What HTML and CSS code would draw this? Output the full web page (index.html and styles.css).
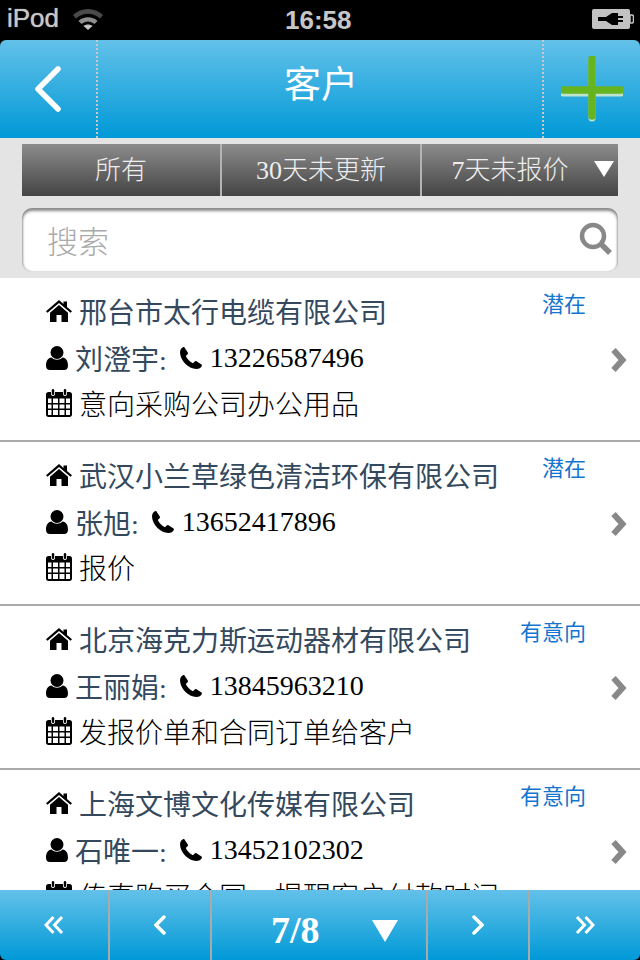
FILE: index.html
```html
<!DOCTYPE html>
<html lang="zh-CN">
<head>
    <meta charset="UTF-8">
    <meta name="viewport" content="width=device-width, initial-scale=1.0">
    <title>客户</title>
    <link rel="stylesheet" href="styles.css">
</head>
<body>
    <svg class="icon-defs" width="0" height="0">
        <symbol id="i-home" viewBox="0 0 26 22">
            <path d="M13 0 L17.500 3.900 V1.500 H21 V6.900 L26 11.200 L24.500 12.800 L13 2.900 L1.500 12.800 L0 11.200 Z"/>
            <path d="M13 5 L22 12.700 V22 H15.500 V15 H10.500 V22 H4 V12.700 Z"/>
        </symbol>
        <symbol id="i-user" viewBox="0 0 22 24">
            <circle cx="11" cy="6.500" r="6.500"/>
            <path d="M5.500 11.500 C8.500 14.500 13.500 14.500 16.500 11.500 C20 12 22 15 22 19.500 C22 22.500 20.500 24 18 24 H4 C1.500 24 0 22.500 0 19.500 C0 15 2 12 5.500 11.500 Z"/>
        </symbol>
        <symbol id="i-phone" viewBox="0 0 22 22">
            <path d="M4.500 0.500 L7.800 5.500 C8.200 6.200 8 6.800 7.500 7.300 L5.800 9 C7.200 12 10 14.800 13 16.200 L14.700 14.500 C15.200 14 15.800 13.800 16.500 14.200 L21.500 17.500 C22 17.800 22 18.500 21.800 19 C21 20.800 18.800 22 16.500 22 C8 21.500 0.500 14 0 5.500 C0 3.200 1.200 1 3 0.200 C3.500 0 4.200 0 4.500 0.500 Z"/>
        </symbol>
        <symbol id="i-calendar" viewBox="0 0 26 28">
            <path fill-rule="evenodd" d="M2.500 3 H5 V5 C5 7.500 9 7.500 9 5 V3 H17 V5 C17 7.500 21 7.500 21 5 V3 H23.500 C25 3 26 4 26 5.500 V25.500 C26 27 25 28 23.500 28 H2.500 C1 28 0 27 0 25.500 V5.500 C0 4 1 3 2.500 3 Z M2 9.500 V14 H5.500 V9.500 Z M7 9.500 V14 H12 V9.500 Z M13.500 9.500 V14 H18.500 V9.500 Z M20 9.500 V14 H24 V9.500 Z M2 15.500 V19.500 H5.500 V15.500 Z M7 15.500 V19.500 H12 V15.500 Z M13.500 15.500 V19.500 H18.500 V15.500 Z M20 15.500 V19.500 H24 V15.500 Z M2 21 V26 H5.500 V21 Z M7 21 V26 H12 V21 Z M13.500 21 V26 H18.500 V21 Z M20 21 V26 H24 V21 Z"/>
            <rect x="5.800" y="0" width="2.400" height="6" rx="1.200"/>
            <rect x="17.800" y="0" width="2.400" height="6" rx="1.200"/>
        </symbol>
        <symbol id="i-more" viewBox="0 0 18 26">
            <path d="M3.500 3 L12.500 13 L3.500 23" fill="none" stroke="#888" stroke-width="6"/>
        </symbol>
    </svg>

    <div class="status-bar">
        <div class="status-left">
            <span>iPod</span>
            <svg class="wifi" viewBox="0 0 32 24" width="32" height="24">
                <path d="M1 9 C9 1 23 1 31 9 L28 12.500 C21.500 6 10.500 6 4 12.500 Z" fill="#4a4a4a"/>
                <path d="M6.500 15 C11.500 10 20.500 10 25.500 15 L22.500 18 C18.500 14.500 13.500 14.500 9.500 18 Z" fill="#8e8e8e"/>
                <path d="M11.500 20 C14 18 18 18 20.500 20 L16 24 Z" fill="#c4c4c4"/>
            </svg>
        </div>
        <span class="status-time">16:58</span>
        <svg class="battery" viewBox="0 0 42 20" width="42" height="20">
            <rect x="0" y="0" width="38" height="20" rx="2" fill="#c2c2c2"/>
            <path d="M38 6 H40 C41 6 41.500 7 41.500 8 V12 C41.500 13 41 14 40 14 H38 Z" fill="none" stroke="#c2c2c2" stroke-width="1.500"/>
            <path d="M6 8 H14 L20 4 H26 V7 H31 V9 H26 V11 H31 V13 H26 V16 H20 L14 12 H6 Z" fill="#000"/>
        </svg>
    </div>

    <header class="top-bar">
        <a class="top-btn">
            <svg class="back-icon" viewBox="0 0 32 50" width="32" height="50">
                <path d="M26 5 L6 25 L26 45" fill="none" stroke="#fff" stroke-width="5.500" stroke-linecap="round" stroke-linejoin="round"/>
            </svg>
        </a>
        <h1>客户</h1>
        <a class="top-btn top-btn-right">
            <svg class="add-icon" viewBox="0 0 62 66" width="62" height="66">
                <path d="M2 37 H60 M31 4 V62" fill="none" stroke="#e4f3c8" stroke-opacity="0.800" stroke-width="7" stroke-linecap="round"/>
                <path d="M2 34 H60 M31 3 V60" fill="none" stroke="#66b420" stroke-width="7.500" stroke-linecap="round"/>
            </svg>
        </a>
    </header>

    <div class="filter-area">
        <div class="tabs">
            <div class="tab">所有</div>
            <div class="tab">30天未更新</div>
            <div class="tab tab-last">7天未报价<span class="tab-arrow"></span></div>
        </div>
        <div class="search">
            <span class="search-text">搜索</span>
            <svg class="search-icon" viewBox="0 0 34 34" width="34" height="34">
                <circle cx="14" cy="14" r="11" fill="none" stroke="#888" stroke-width="4.500"/>
                <path d="M22 22 L31 31" stroke="#888" stroke-width="5.500"/>
            </svg>
        </div>
    </div>

    <div class="customer-list">
        <div class="customer">
            <span class="tag">潜在</span>
            <div class="line company"><svg class="ico ico-home"><use href="#i-home"/></svg>邢台市太行电缆有限公司</div>
            <div class="line contact"><svg class="ico ico-user"><use href="#i-user"/></svg><span class="name">刘澄宇:</span><svg class="ico ico-phone"><use href="#i-phone"/></svg>13226587496</div>
            <div class="line"><svg class="ico ico-cal"><use href="#i-calendar"/></svg>意向采购公司办公用品</div>
            <svg class="more"><use href="#i-more"/></svg>
        </div>
        <div class="customer">
            <span class="tag">潜在</span>
            <div class="line company"><svg class="ico ico-home"><use href="#i-home"/></svg>武汉小兰草绿色清洁环保有限公司</div>
            <div class="line contact"><svg class="ico ico-user"><use href="#i-user"/></svg><span class="name">张旭:</span><svg class="ico ico-phone"><use href="#i-phone"/></svg>13652417896</div>
            <div class="line"><svg class="ico ico-cal"><use href="#i-calendar"/></svg>报价</div>
            <svg class="more"><use href="#i-more"/></svg>
        </div>
        <div class="customer">
            <span class="tag">有意向</span>
            <div class="line company"><svg class="ico ico-home"><use href="#i-home"/></svg>北京海克力斯运动器材有限公司</div>
            <div class="line contact"><svg class="ico ico-user"><use href="#i-user"/></svg><span class="name">王丽娟:</span><svg class="ico ico-phone"><use href="#i-phone"/></svg>13845963210</div>
            <div class="line"><svg class="ico ico-cal"><use href="#i-calendar"/></svg>发报价单和合同订单给客户</div>
            <svg class="more"><use href="#i-more"/></svg>
        </div>
        <div class="customer">
            <span class="tag">有意向</span>
            <div class="line company"><svg class="ico ico-home"><use href="#i-home"/></svg>上海文博文化传媒有限公司</div>
            <div class="line contact"><svg class="ico ico-user"><use href="#i-user"/></svg><span class="name">石唯一:</span><svg class="ico ico-phone"><use href="#i-phone"/></svg>13452102302</div>
            <div class="line"><svg class="ico ico-cal"><use href="#i-calendar"/></svg>传真购买合同，提醒客户付款时间</div>
            <svg class="more"><use href="#i-more"/></svg>
        </div>
    </div>

    <footer class="pager">
        <a class="page-btn page-first">
            <svg viewBox="0 0 20 20" width="20" height="20"><path d="M9.500 2 L2 10 L9.500 18 M18 2 L10.500 10 L18 18" fill="none" stroke="#fff" stroke-width="3"/></svg>
        </a>
        <a class="page-btn page-prev">
            <svg viewBox="0 0 12 20" width="12" height="20"><path d="M10 2 L2 10 L10 18" fill="none" stroke="#fff" stroke-width="3.500" stroke-linecap="round"/></svg>
        </a>
        <div class="page-current">7/8<span class="page-arrow"></span></div>
        <a class="page-btn page-next">
            <svg viewBox="0 0 12 20" width="12" height="20"><path d="M2 2 L10 10 L2 18" fill="none" stroke="#fff" stroke-width="3.500" stroke-linecap="round"/></svg>
        </a>
        <a class="page-btn page-last">
            <svg viewBox="0 0 20 20" width="20" height="20"><path d="M2 2 L9.500 10 L2 18 M10.500 2 L18 10 L10.500 18" fill="none" stroke="#fff" stroke-width="3"/></svg>
        </a>
    </footer>
</body>
</html>
```

FILE: styles.css
```css
* {
    box-sizing: border-box;
}
body {
    font-family: "Liberation Serif", "Noto Sans CJK SC", serif;
    font-weight: 300;
    margin: 0;
    padding: 0;
    width: 640px;
    height: 960px;
    display: flex;
    flex-direction: column;
    overflow: hidden;
    background-color: #000;
}
.icon-defs {
    position: absolute;
}
.status-bar {
    flex: none;
    height: 40px;
    padding: 0 6px 0 7px;
    display: flex;
    align-items: center;
    justify-content: space-between;
    position: relative;
    background-color: #000;
    color: #c6c6c6;
    font-family: "Liberation Sans", sans-serif;
    font-size: 26px;
    font-weight: normal;
}
.status-left {
    display: flex;
    align-items: center;
    gap: 13px;
    margin-top: -4px;
    text-shadow: 0 0 1px #c6c6c6;
}
.status-time {
    position: absolute;
    left: 285px;
    top: 4px;
    line-height: 32px;
    font-weight: bold;
}
.battery {
    margin-top: -2px;
}
.top-bar {
    flex: none;
    height: 98px;
    display: flex;
    align-items: center;
    background: linear-gradient(#63c1e9, #0099d7);
    border-radius: 6px 6px 0 0;
    color: #fff;
}
.top-bar h1 {
    flex: 1;
    margin: 0;
    text-align: center;
    font-size: 37px;
    font-weight: normal;
    padding: 0 0 14px 2px;
}
.top-btn {
    width: 98px;
    height: 98px;
    display: flex;
    align-items: center;
    padding: 0 0 0 32px;
    border-right: 2px dotted #c8c8c8;
}
.top-btn-right {
    padding: 0 0 0 17px;
    border-right: none;
    border-left: 2px dotted #c8c8c8;
}
.back-icon {
    filter: blur(0.6px);
}
.add-icon {
    filter: blur(0.6px);
}
.filter-area {
    flex: none;
    height: 140px;
    padding: 6px 22px 6px;
    background-color: #e4e4e4;
}
.tabs {
    height: 52px;
    display: flex;
    background: linear-gradient(#8c8c8c, #444);
    color: #eee;
    font-size: 26px;
}
.tab {
    width: 200px;
    padding-bottom: 5px;
    display: flex;
    align-items: center;
    justify-content: center;
    white-space: nowrap;
    border-right: 2px solid #b4b4b4;
}
.tab-last {
    flex: 1;
    border-right: none;
    padding-right: 20px;
    position: relative;
}
.tab-arrow {
    position: absolute;
    right: 4px;
    top: 17px;
    border-left: 10px solid transparent;
    border-right: 10px solid transparent;
    border-top: 16px solid #fff;
}
.search {
    height: 64px;
    margin-top: 12px;
    padding: 0 5px 2px 25px;
    display: flex;
    align-items: center;
    justify-content: space-between;
    background-color: #fff;
    border-radius: 10px;
    box-shadow: inset 0 3px 3px #8c8c8c, inset 1px 0 2px #bbb, inset -1px 0 2px #ccc;
}
.search-text {
    font-size: 31px;
    color: #aaa;
}
.search-icon {
    filter: blur(0.6px);
}
.customer-list {
    flex: 1;
    min-height: 0;
    overflow: hidden;
    background-color: #fff;
}
.customer {
    position: relative;
    height: 164px;
    padding: 10px 0 0 46px;
    border-bottom: 2px solid #aaa;
    color: #000;
    font-size: 28px;
}
.line {
    height: 46px;
    display: flex;
    align-items: center;
    white-space: nowrap;
}
.contact {
    padding-top: 2px;
}
.company, .name {
    color: #34495e;
    font-weight: normal;
}
.ico {
    flex: none;
    fill: #000;
}
.ico-home {
    width: 26px;
    height: 22px;
    margin-right: 7px;
}
.ico-user {
    width: 22px;
    height: 24px;
    margin-right: 7px;
}
.ico-phone {
    width: 22px;
    height: 22px;
    margin: 0 8px 0 13px;
}
.ico-cal {
    width: 26px;
    height: 28px;
    margin-right: 7px;
}
.tag {
    position: absolute;
    top: 12px;
    right: 54px;
    font-size: 22px;
    font-weight: normal;
    line-height: 30px;
    color: #1475cf;
}
.more {
    position: absolute;
    top: 69px;
    right: 12px;
    width: 18px;
    height: 26px;
    filter: blur(0.5px);
}
.pager {
    flex: none;
    height: 70px;
    display: flex;
    background: linear-gradient(#63c1e9, #0099d7);
    border-radius: 0 0 6px 6px;
    color: #fff;
}
.page-btn {
    display: flex;
    align-items: center;
    justify-content: center;
}
.page-first {
    width: 110px;
    border-right: 2px solid #aaa;
}
.page-prev {
    width: 102px;
    border-right: 2px solid #aaa;
}
.page-next {
    width: 104px;
    border-left: 2px solid #aaa;
    border-right: 2px solid #aaa;
}
.page-last {
    flex: 1;
}
.page-current {
    width: 214px;
    position: relative;
    padding: 5px 0 0 59px;
    font-size: 38px;
    font-weight: bold;
    line-height: 70px;
}
.page-arrow {
    position: absolute;
    left: 160px;
    top: 30px;
    border-left: 13px solid transparent;
    border-right: 13px solid transparent;
    border-top: 22px solid #fff;
}
```
